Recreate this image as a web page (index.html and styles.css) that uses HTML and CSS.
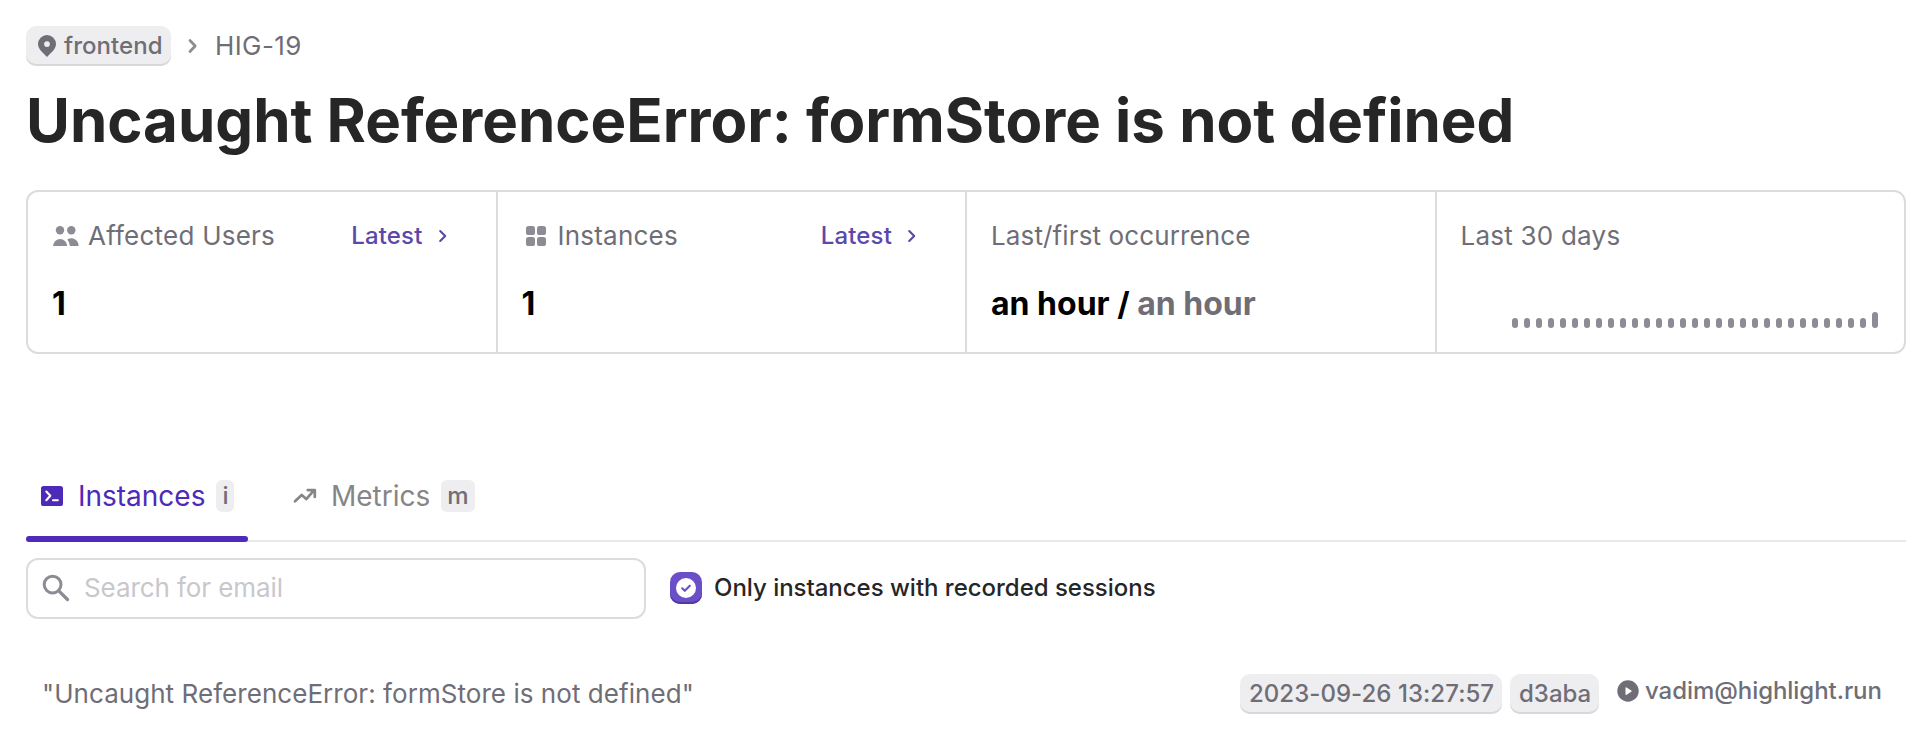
FILE: index.html
```html
<!DOCTYPE html>
<html lang="en">
<head>
<meta charset="utf-8">
<title>Uncaught ReferenceError: formStore is not defined</title>
<link rel="stylesheet" href="styles.css">
</head>
<body>
<main class="page">
  <nav class="crumbs">
    <span class="chip chip-project">
      <svg width="18" height="22" viewBox="0 0 18 22"><path fill="#6f6e77" fill-rule="evenodd" d="M9 22C6 18.600 0 14.500 0 9a9 9 0 0 1 18 0C18 14.500 12 18.600 9 22ZM9 6.200a2.900 2.900 0 1 0 0 5.800 2.900 2.900 0 0 0 0-5.800Z"/></svg>
      <span>frontend</span>
    </span>
    <svg class="crumb-arrow" width="12" height="16" viewBox="0 0 12 16"><path d="M3 2.500 8.200 8 3 13.500" fill="none" stroke="#8d8b94" stroke-width="2.700" stroke-linecap="round" stroke-linejoin="round"/></svg>
    <span class="crumb-id">HIG-19</span>
  </nav>

  <h1 class="title">Uncaught ReferenceError: formStore is not defined</h1>

  <section class="stats">
    <div class="stat">
      <div class="stat-head">
        <svg class="stat-icon" width="26" height="20" viewBox="0 0 26 20"><g fill="#8d8b94"><circle cx="7" cy="4.200" r="4.200"/><circle cx="18.300" cy="4.200" r="4.200"/><path d="M0 20a7.200 7.800 0 0 1 14.300 0ZM16.900 20a10.500 10.500 0 0 0-2.600-6.400A7.200 7.600 0 0 1 25.600 20Z"/></g></svg>
        <span class="stat-label">Affected Users</span>
        <a class="latest"><span>Latest</span><svg width="10" height="14" viewBox="0 0 10 14"><path d="M2.200 2 7.200 7l-5 5" fill="none" stroke="#5b48a8" stroke-width="2.100" stroke-linecap="round" stroke-linejoin="round"/></svg></a>
      </div>
      <div class="stat-value">1</div>
    </div>
    <div class="stat">
      <div class="stat-head">
        <svg class="stat-icon" width="26" height="20" viewBox="0 0 26 20"><g fill="#8d8b94"><rect x="3" y="0" width="9" height="9" rx="2.600"/><rect x="14" y="0" width="9" height="9" rx="2.600"/><rect x="3" y="11" width="9" height="9" rx="2.600"/><rect x="14" y="11" width="9" height="9" rx="2.600"/></g></svg>
        <span class="stat-label">Instances</span>
        <a class="latest"><span>Latest</span><svg width="10" height="14" viewBox="0 0 10 14"><path d="M2.200 2 7.200 7l-5 5" fill="none" stroke="#5b48a8" stroke-width="2.100" stroke-linecap="round" stroke-linejoin="round"/></svg></a>
      </div>
      <div class="stat-value">1</div>
    </div>
    <div class="stat">
      <div class="stat-head"><span class="stat-label stat-label-tight">Last/first occurrence</span></div>
      <div class="stat-value">an hour / <span class="muted">an hour</span></div>
    </div>
    <div class="stat">
      <div class="stat-head"><span class="stat-label">Last 30 days</span></div>
      <div class="bars">
        <i></i><i></i><i></i><i></i><i></i><i></i><i></i><i></i><i></i><i></i><i></i><i></i><i></i><i></i><i></i><i></i><i></i><i></i><i></i><i></i><i></i><i></i><i></i><i></i><i></i><i></i><i></i><i></i><i></i><i></i><i class="tall"></i>
      </div>
    </div>
  </section>

  <div class="tabs">
    <div class="tab tab-active">
      <svg class="tab-icon" width="24" height="20" viewBox="0 0 24 20"><rect x="1" y="0" width="22" height="20" rx="2.600" fill="#4e2ab8"/><path d="M6.300 5.500 10.300 9.800 6.300 14.200M13 14.300h4.800" fill="none" stroke="#fff" stroke-width="2.100" stroke-linecap="round" stroke-linejoin="round"/></svg>
      <span class="tab-name">Instances</span><kbd class="key">i</kbd>
    </div>
    <div class="tab">
      <svg class="tab-icon" width="24" height="20" viewBox="0 0 24 20"><path d="M2 15.300 8.700 8.900 13.300 13.100 20.700 4.600M14.700 4.100H21.800V10.900" fill="none" stroke="#868686" stroke-width="2.700" stroke-linecap="round" stroke-linejoin="round"/></svg>
      <span class="tab-name">Metrics</span><kbd class="key">m</kbd>
    </div>
  </div>

  <div class="filters">
    <label class="search">
      <svg width="28" height="28" viewBox="0 0 28 28"><circle cx="10.600" cy="10.600" r="8.400" fill="none" stroke="#8d8b94" stroke-width="3"/><path d="M16.800 16.800 25.500 25.500" stroke="#8d8b94" stroke-width="3.300" stroke-linecap="round"/></svg>
      <span class="placeholder">Search for email</span>
    </label>
    <span class="check"><svg width="20" height="20" viewBox="0 0 20 20"><circle cx="10" cy="10" r="10" fill="#fff"/><path d="M6.200 10.300 8.800 12.800 13.800 7.700" fill="none" stroke="#6b4fc8" stroke-width="2.100" stroke-linecap="round" stroke-linejoin="round"/></svg></span>
    <span class="check-label">Only instances with recorded sessions</span>
  </div>

  <div class="row">
    <span class="row-text">"Uncaught ReferenceError: formStore is not defined"</span>
    <span class="chip chip-time">2023-09-26 13:27:57</span>
    <span class="chip chip-hash">d3aba</span>
    <span class="user">
      <svg width="22" height="22" viewBox="0 0 22 22"><circle cx="11" cy="11" r="10.700" fill="#6f6e77"/><path d="M9.200 8v6.200l4.700-3.100Z" fill="#fff" stroke="#fff" stroke-width="1.400" stroke-linejoin="round"/></svg>
      <span>vadim@highlight.run</span>
    </span>
  </div>
</main>
</body>
</html>
```

FILE: styles.css
```css
* { box-sizing: border-box; }
body {
  margin: 0;
  background: #fff;
  font-family: Inter, "Liberation Sans", sans-serif;
  color: #6f6e77;
}
svg { display: block; flex: none; }
span, h1 { white-space: nowrap; }
.page { width: 1924px; height: 752px; padding: 26px 18px 0 26px; overflow: hidden; }

.crumbs { display: flex; height: 40px; line-height: 39px; }
.chip {
  display: flex;
  align-items: center;
  flex: none;
  height: 40px;
  border-radius: 10px;
  background: #eeedef;
  box-shadow: inset 0 -2px 0 #d8d7da;
  line-height: 38px;
}
.chip-project { width: 145px; padding-left: 12px; gap: 8px; font-size: 24px; font-weight: 500; letter-spacing: 0.050px; }
.crumb-arrow { margin: 12px 0 0 16px; }
.crumb-id { margin-left: 16px; font-size: 26px; font-weight: 400; letter-spacing: 0.400px; }

.title {
  margin: 14px 0 0;
  height: 80px;
  font-size: 60px;
  line-height: 80px;
  font-weight: 700;
  letter-spacing: -0.020px;
  color: #262626;
}

.stats {
  display: grid;
  grid-template-columns: repeat(3, 469.500px) 1fr;
  width: 1880px;
  height: 164px;
  margin-top: 30px;
  border: 2px solid #dcdcdc;
  border-radius: 12px;
}
.stat { padding: 26px 24px 0; }
.stat + .stat { border-left: 2px solid #dcdcdc; margin-left: -2px; }
.stat-head { display: flex; align-items: center; height: 36px; }
.stat-icon { margin: 0 9px 0 1px; }
.stat-label { font-size: 26px; line-height: 36px; letter-spacing: 0.230px; }
.stat-label-tight { letter-spacing: 0.130px; }
.latest {
  display: flex;
  align-items: center;
  gap: 15px;
  margin: -1px 26px 0 auto;
  font-size: 24px;
  font-weight: 500;
  letter-spacing: 0.150px;
  color: #5b48a8;
}
.stat-value { margin-top: 30px; font-size: 32px; line-height: 40px; font-weight: 700; color: #000; }
.muted { color: #6f6e77; }
.bars { display: flex; align-items: flex-end; justify-content: flex-end; gap: 6px; height: 74px; padding-right: 2px; }
.bars i { width: 6px; height: 10px; border-radius: 3px; background: #8d8b94; }
.bars .tall { height: 16px; }

.tabs { display: flex; gap: 31px; height: 84px; margin-top: 104px; border-bottom: 2px solid #e9e9e9; }
.tab { position: relative; display: flex; align-items: center; height: 84px; padding: 0 13px 8px 14px; font-size: 28px; color: #868686; }
.tab-active { width: 222px; color: #4e2ab8; }
.tab-active::after {
  content: "";
  position: absolute;
  left: 0;
  right: 0;
  bottom: 0;
  height: 6px;
  border-radius: 3px;
  background: #4e2ab8;
}
.tab-icon { margin-right: 14px; }
.tab-name { letter-spacing: -0.010px; }
.key {
  height: 32px;
  margin-left: 11px;
  padding: 0 6px;
  border-radius: 6px;
  background: #eeedef;
  font: 500 24px/32px Inter, "Liberation Sans", sans-serif;
  color: #6f6e77;
}

.filters { display: flex; align-items: center; height: 61px; margin-top: 16px; }
.search { display: flex; align-items: center; width: 620px; height: 61px; padding: 0 0 1px 14px; border: 2px solid #dcdcdc; border-radius: 12px; }
.placeholder { margin: -1px 0 0 14px; font-size: 26px; letter-spacing: -0.080px; color: #c8c7cb; }
.check { width: 32px; height: 32px; margin: -2px 0 0 24px; padding: 6px; border-radius: 10px; background: #6b4fc8; box-shadow: inset 0 -2px 0 #5238a0; }
.check-label { margin: -2px 0 0 12px; font-size: 24px; font-weight: 500; color: #262626; letter-spacing: -0.020px; }

.row { display: flex; height: 40px; margin-top: 55px; padding-left: 16px; font-size: 26px; line-height: 39px; }
.row-text { flex: 1; letter-spacing: 0.050px; }
.chip-time { width: 262px; padding-left: 9px; font-size: 24px; font-weight: 500; letter-spacing: 0.040px; }
.chip-hash { width: 89px; margin-left: 8px; padding-left: 9px; font-size: 24px; font-weight: 500; }
.user { display: flex; align-items: center; width: 289px; height: 34px; margin-left: 18px; gap: 6px; font-size: 24px; font-weight: 500; letter-spacing: -0.050px; }
.user span { margin-top: -1px; }
```
